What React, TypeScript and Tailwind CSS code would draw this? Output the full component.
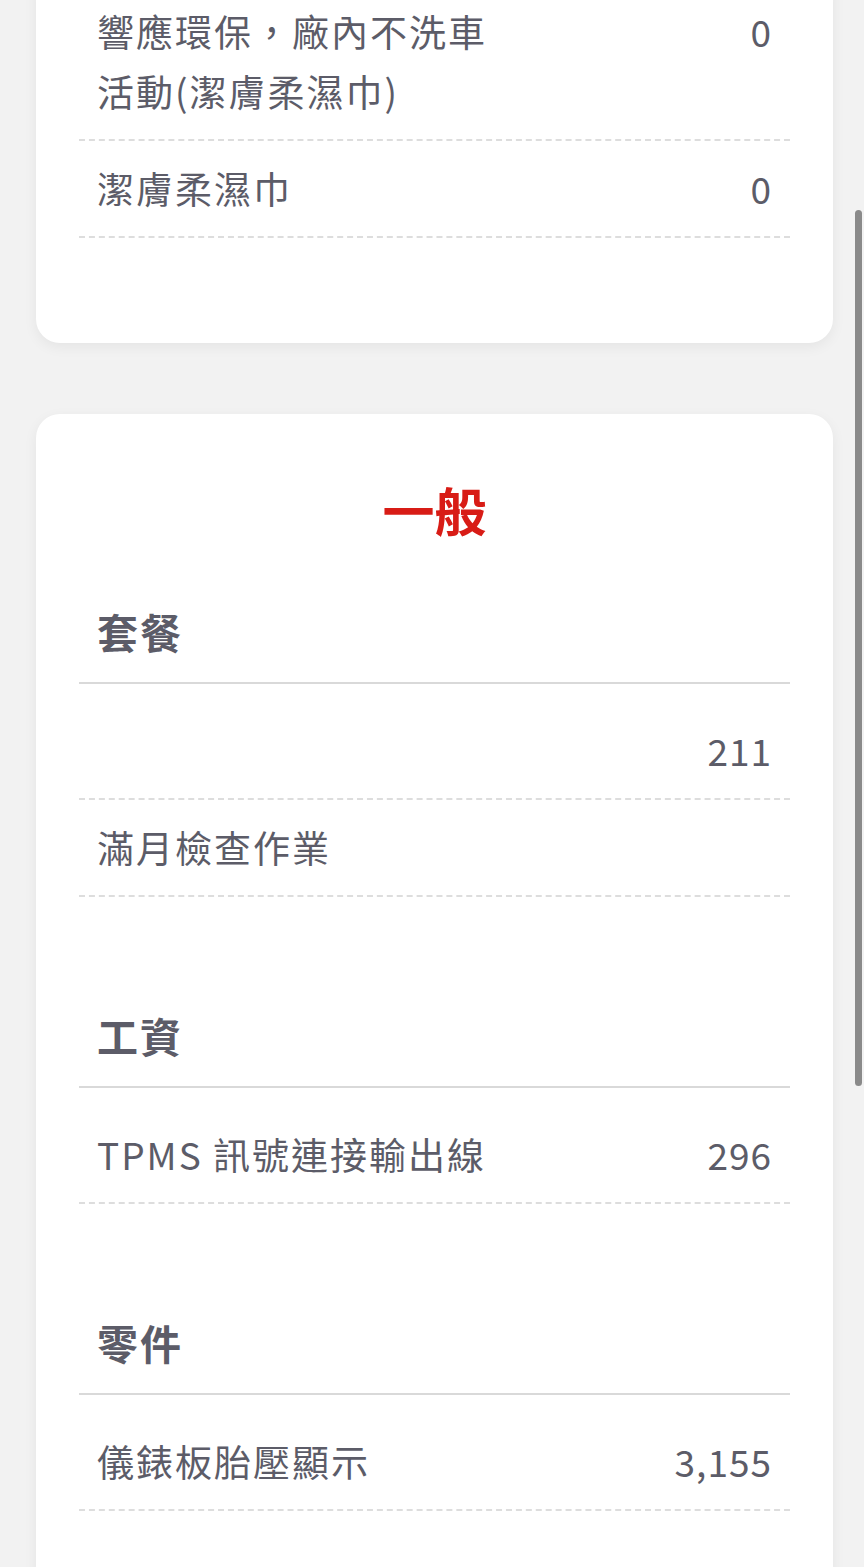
const font = { fontFamily: '"Noto Sans CJK TC", "Noto Sans", sans-serif' };

type Item = { name?: string; value?: string };

function Row({ name, value }: Item) {
  return (
    <div className="flex justify-between items-start gap-6 px-[18px] pt-[17px] pb-[18px] border-b-2 border-dashed border-[#dddddd]">
      <div className="whitespace-pre-line text-[37px] leading-[60px] tracking-[2px] text-[#5c5c68]">{name}</div>
      <div className="text-[37px] leading-[60px] tracking-[1px] text-[#5c5c68] text-right shrink-0">{value}</div>
    </div>
  );
}

function Section({ title, items, first }: { title: string; items: Item[]; first?: boolean }) {
  return (
    <div className={first ? "mt-[61px]" : "mt-[108px]"}>
      <div className="px-[18px] pb-[21px] border-b-2 border-[#d9d9d9] text-[41px] leading-[60px] font-semibold tracking-[2px] text-[#5c5c68]">
        {title}
      </div>
      <div className="mt-[19px]">
        {items.map((it, i) => (
          <Row key={i} {...it} />
        ))}
      </div>
    </div>
  );
}

export default function App() {
  return (
    <div className="relative min-h-[1567px] bg-[#f2f2f2] overflow-hidden" style={font}>
      <div className="ml-[36px] mr-[31px] -mt-[16px] rounded-b-[24px] bg-white px-[43px] pb-[105px] shadow-[0_4px_14px_rgba(0,0,0,0.06)]">
        <Row name={"響應環保，廠內不洗車\n活動(潔膚柔濕巾)"} value="0" />
        <Row name="潔膚柔濕巾" value="0" />
      </div>

      <div className="ml-[36px] mr-[31px] mt-[71px] rounded-[24px] bg-white px-[43px] pt-[66px] pb-[80px] shadow-[0_4px_14px_rgba(0,0,0,0.06)]">
        <h2 className="text-center text-[52px] leading-[60px] font-bold text-[#d81c16]">一般</h2>
        <Section first title="套餐" items={[{ name: "", value: "211" }, { name: "滿月檢查作業", value: "" }]} />
        <Section title="工資" items={[{ name: "TPMS 訊號連接輸出線", value: "296" }]} />
        <Section title="零件" items={[{ name: "儀錶板胎壓顯示", value: "3,155" }]} />
      </div>

      <div className="absolute right-[2px] top-[210px] h-[876px] w-[7px] rounded-full bg-[#8a8a8a]" />
    </div>
  );
}
